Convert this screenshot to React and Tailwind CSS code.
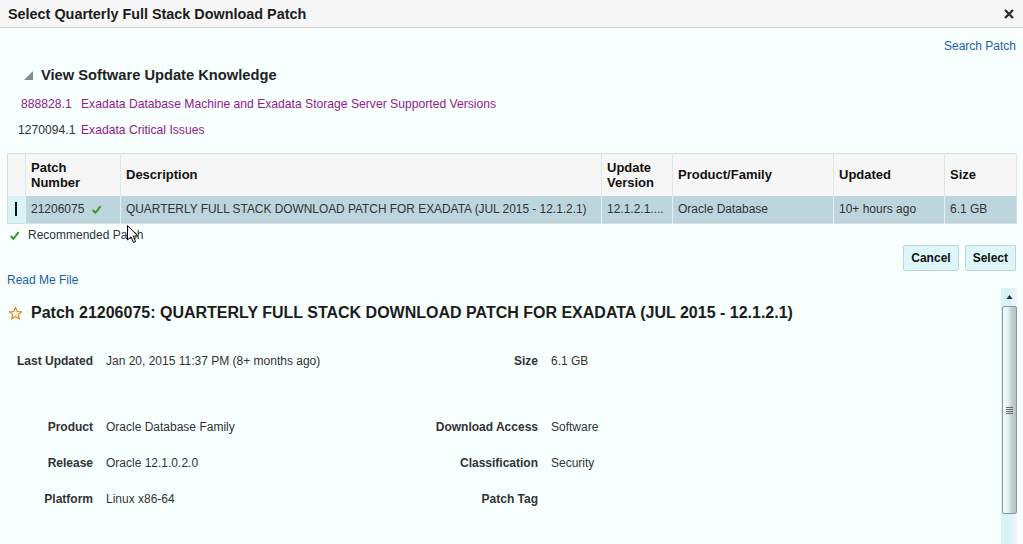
import React from "react";

const cols = [
  { w: "w-[18px]", label: "" },
  { w: "w-[95px]", label: "Patch Number" },
  { w: "w-[481px]", label: "Description" },
  { w: "w-[71px]", label: "Update Version" },
  { w: "w-[161px]", label: "Product/Family" },
  { w: "w-[111px]", label: "Updated" },
  { w: "w-[72px]", label: "Size" },
];

function Check({ className = "" }) {
  return (
    <svg viewBox="0 0 10 10" className={className}>
      <path d="M1.5 5.5 L4 8 L8.8 2" fill="none" stroke="#3b9a1e" strokeWidth="1.8" />
    </svg>
  );
}

function Star() {
  return (
    <svg viewBox="0 0 16 16" className="w-[15px] h-[15px]">
      <path
        d="M8 1.5 L9.9 6 L14.6 6.2 L10.9 9.2 L12.2 14 L8 11.3 L3.8 14 L5.1 9.2 L1.4 6.2 L6.1 6 Z"
        fill="#fffaf0"
        stroke="#e17c0f"
        strokeWidth="1.2"
        strokeLinejoin="round"
      />
    </svg>
  );
}

function Row({ l1, v1, l2, v2, className = "" }) {
  return (
    <div className={`flex items-center h-[36px] ${className}`}>
      <div className="w-[93px] text-right font-bold text-[#333]">{l1}</div>
      <div className="w-[300px] ml-[13px] text-[#333]">{v1}</div>
      <div className="w-[132px] text-right font-bold text-[#333]">{l2}</div>
      <div className="ml-[13px] text-[#333]">{v2}</div>
    </div>
  );
}

export default function App() {
  return (
    <div
      className="relative w-[1023px] h-[544px] overflow-hidden bg-[#f7ffff] text-[12px] leading-[14px]"
      style={{ fontFamily: '"Liberation Sans", Arial, sans-serif' }}
    >
      {/* title bar */}
      <div className="h-[28px] bg-[#f6f6f6] border-b border-[#cfcfcf] flex items-center justify-between pl-[8px] pr-[8px]">
        <span className="text-[14.4px] font-bold text-[#1c1c1c]">Select Quarterly Full Stack Download Patch</span>
        <svg viewBox="0 0 10 10" className="w-[10px] h-[10px] mr-[1px]">
          <path d="M1 1 L9 9 M9 1 L1 9" stroke="#2b2b2b" strokeWidth="2.3" />
        </svg>
      </div>

      <div className="flex justify-end pr-[7px] mt-[11px]">
        <span className="text-[#1d5ea6]">Search Patch</span>
      </div>

      <div className="flex items-center mt-[13px] pl-[24px] h-[18px]">
        <svg viewBox="0 0 10 10" className="w-[9px] h-[9px]">
          <polygon points="10,0 10,10 0,10" fill="#8a8a8a" />
        </svg>
        <span className="ml-[8px] text-[14.7px] font-bold text-[#222]">View Software Update Knowledge</span>
      </div>

      <div className="flex mt-[13px] text-[#92208f] text-[12.15px]">
        <span className="w-[81px] pl-[21px]">888828.1</span>
        <span>Exadata Database Machine and Exadata Storage Server Supported Versions</span>
      </div>
      <div className="flex mt-[12px] text-[12.15px]">
        <span className="w-[81px] pl-[18px] text-[#333]">1270094.1</span>
        <span className="text-[#92208f]">Exadata Critical Issues</span>
      </div>

      {/* table */}
      <table className="ml-[7px] mt-[16px] border-collapse table-fixed w-[1009px] border border-[#d6dede]">
        <thead>
          <tr className="h-[42px] bg-[#f6f6f6]">
            {cols.map((c, i) => (
              <th
                key={i}
                className={`${c.w} px-[5px] text-left align-middle font-bold text-[13px] leading-[15px] text-[#111] border-r border-[#dfe4e4]`}
              >
                {c.label}
              </th>
            ))}
          </tr>
        </thead>
        <tbody>
          <tr className="h-[28px] bg-[#bdd5dc] text-[#333]">
            <td className="bg-[#d8f4f7] border-r border-[#e3f3f5] align-middle">
              <div className="ml-[7px] w-[2px] h-[14px] bg-[#111]" />
            </td>
            <td className="px-[5px] border-r border-[#e3f3f5]">
              <div className="flex items-center">
                21206075
                <Check className="w-[11px] h-[11px] ml-[7px]" />
              </div>
            </td>
            <td className="px-[5px] border-r border-[#e3f3f5] whitespace-nowrap text-[11.9px]">
              QUARTERLY FULL STACK DOWNLOAD PATCH FOR EXADATA (JUL 2015 - 12.1.2.1)
            </td>
            <td className="px-[5px] border-r border-[#e3f3f5]">12.1.2.1....</td>
            <td className="px-[5px] border-r border-[#e3f3f5]">Oracle Database</td>
            <td className="px-[5px] border-r border-[#e3f3f5]">10+ hours ago</td>
            <td className="px-[5px]">6.1 GB</td>
          </tr>
        </tbody>
      </table>

      <div className="flex items-center mt-[4px] pl-[9px] text-[#333]">
        <Check className="w-[11px] h-[11px]" />
        <span className="ml-[8px]">Recommended Patch</span>
      </div>

      <div className="flex justify-end gap-[6px] pr-[7px] mt-[3px]">
        <button className="h-[26px] px-[7px] bg-[#dcf6f9] border border-[#c3d2d6] rounded-[2px] font-bold text-[#111]">
          Cancel
        </button>
        <button className="h-[26px] px-[7px] bg-[#dcf6f9] border border-[#c3d2d6] rounded-[2px] font-bold text-[#111]">
          Select
        </button>
      </div>

      <div className="mt-[2px] pl-[7px] text-[#1d5ea6]">Read Me File</div>

      {/* detail scroll area */}
      <div className="flex mt-[1px] h-[300px]">
        <div className="flex-1 pt-[15px]">
          <div className="flex items-center h-[20px] pl-[8px]">
            <Star />
            <span className="ml-[8px] text-[16px] font-bold text-[#1c1c1c]">
              Patch 21206075: QUARTERLY FULL STACK DOWNLOAD PATCH FOR EXADATA (JUL 2015 - 12.1.2.1)
            </span>
          </div>
          <Row className="mt-[20px]" l1="Last Updated" v1="Jan 20, 2015 11:37 PM (8+ months ago)" l2="Size" v2="6.1 GB" />
          <Row className="mt-[30px]" l1="Product" v1="Oracle Database Family" l2="Download Access" v2="Software" />
          <Row l1="Release" v1="Oracle 12.1.0.2.0" l2="Classification" v2="Security" />
          <Row l1="Platform" v1="Linux x86-64" l2="Patch Tag" v2="" />
        </div>
        <div className="w-[16px] mr-[6px] bg-[linear-gradient(90deg,#d6f3f6_0%,#d6f3f6_55%,#f2f6f6_100%)] flex flex-col items-center">
          <div className="h-[18px] flex items-center justify-center">
            <svg viewBox="0 0 8 5" className="w-[7px] h-[4px]">
              <polygon points="4,0 8,5 0,5" fill="#333" />
            </svg>
          </div>
          <div className="w-[15px] h-[208px] border border-[#8c9494] rounded-[2px] bg-[linear-gradient(90deg,#f4f8f8_0%,#e6f4f5_35%,#c2cccc_70%,#b6c2c2_100%)] flex items-center justify-center">
            <div className="flex flex-col gap-[1px]">
              <div className="w-[7px] h-[1px] bg-[#666]" />
              <div className="w-[7px] h-[1px] bg-[#666]" />
              <div className="w-[7px] h-[1px] bg-[#666]" />
              <div className="w-[7px] h-[1px] bg-[#666]" />
            </div>
          </div>
        </div>
      </div>

      {/* mouse cursor */}
      <svg viewBox="0 0 12 19" className="absolute left-[127px] top-[225px] w-[12px] h-[19px]">
        <path d="M0.5 0.5 L0.5 15 L4 11.8 L6.5 17.5 L8.6 16.6 L6.2 11 L10.8 11 Z" fill="#fff" stroke="#000" strokeWidth="1" />
      </svg>
    </div>
  );
}
